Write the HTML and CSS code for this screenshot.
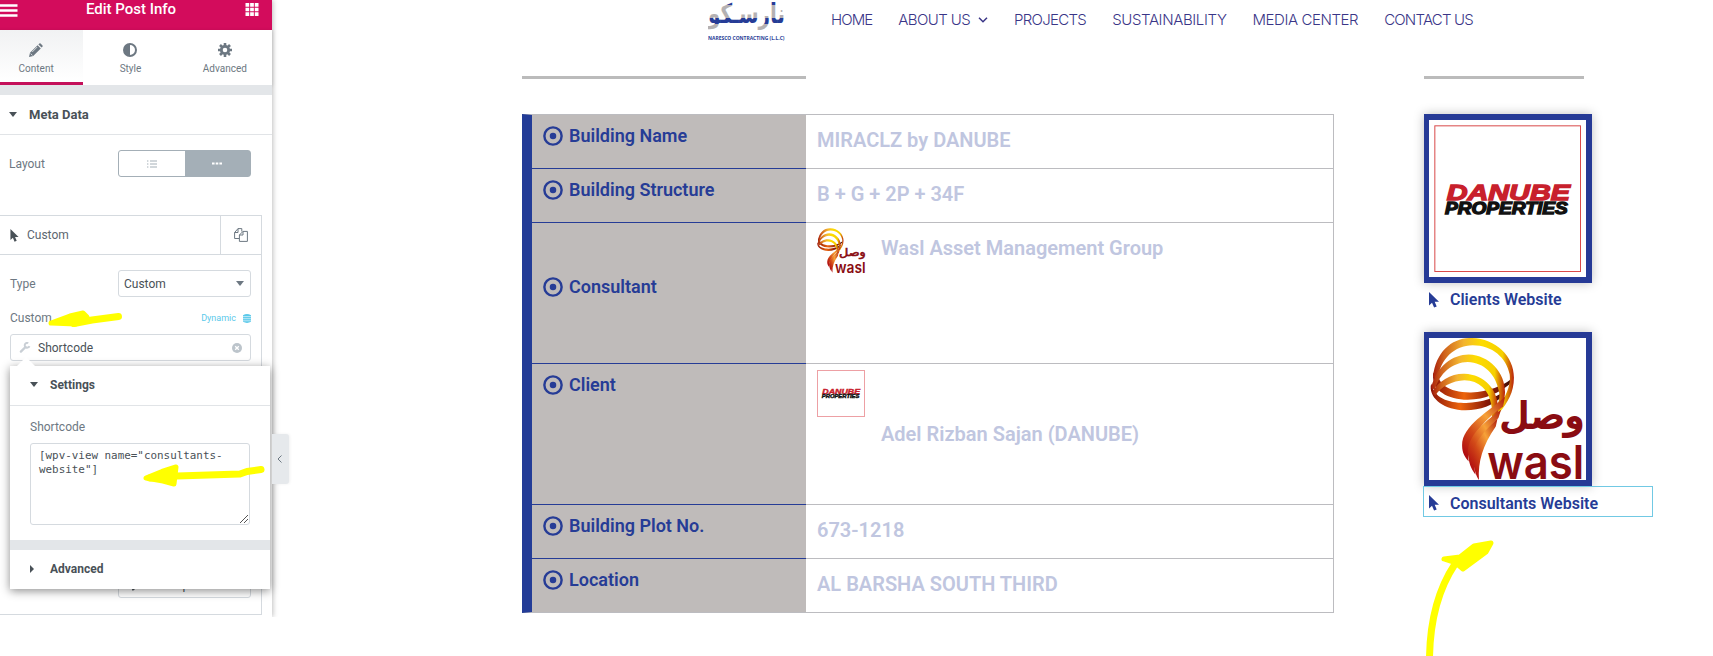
FILE: index.html
```html
<!DOCTYPE html>
<html lang="en">
  <head>
    <meta charset="UTF-8" />
    <meta name="viewport" content="width=device-width, initial-scale=1.0" />
    <title>Edit Post Info</title>
    <link rel="stylesheet" href="styles.css">
  </head>
  <body>
    <!-- shared logos and icons -->
    <svg class="defs" aria-hidden="true">
      <defs>
        <linearGradient id="gold" x1="0" y1="0" x2="1" y2="0">
          <stop offset="0" stop-color="#a8200c" />
          <stop offset="0.14" stop-color="#cf621c" />
          <stop offset="0.38" stop-color="#f3b430" />
          <stop offset="0.6" stop-color="#fddc00" />
          <stop offset="0.86" stop-color="#f6d000" />
          <stop offset="1" stop-color="#b8200c" />
        </linearGradient>
        <linearGradient id="ember" x1="0" y1="0" x2="1" y2="0">
          <stop offset="0" stop-color="#8a1208" />
          <stop offset="0.4" stop-color="#ec640c" />
          <stop offset="0.75" stop-color="#8a1a08" />
          <stop offset="1" stop-color="#3c0c06" />
        </linearGradient>
        <linearGradient id="stem" x1="1" y1="0" x2="0.2" y2="1">
          <stop offset="0" stop-color="#b01c0c" />
          <stop offset="0.4" stop-color="#f7a238" />
          <stop offset="0.7" stop-color="#d24a18" />
          <stop offset="1" stop-color="#b00c10" />
        </linearGradient>
        <linearGradient id="naresco" gradientUnits="userSpaceOnUse" x1="0" y1="0" x2="0" y2="42">
          <stop offset="0.13" stop-color="#263c96" />
          <stop offset="0.13" stop-color="#b5b1b2" />
          <stop offset="0.43" stop-color="#b5b1b2" />
          <stop offset="0.43" stop-color="#263c96" />
          <stop offset="0.57" stop-color="#263c96" />
          <stop offset="0.57" stop-color="#b5b1b2" />
        </linearGradient>
      </defs>
      <symbol id="wasl" viewBox="0 0 471 430">
        <path fill="url(#ember)" d="M24 88C16 140 60 166 125 165C180 162 220 145 246 125L242 140C210 166 170 186 115 187C55 186 6 160 10 108Z" />
        <path fill="url(#ember)" d="M5 138C15 190 70 197 110 197C160 196 200 180 228 160L222 176C190 205 155 219 108 219C45 217 0 185 3 145Z" />
        <path fill="url(#gold)" d="M10 118C18 40 70-2 128 0C200 2 255 55 255 120C255 165 235 195 212 225L207 212C235 170 246 140 242 110C232 60 190 22 130 22C75 23 32 62 24 125Z" />
        <path fill="url(#gold)" d="M5 150C20 85 70 50 118 50C180 52 229 105 228 165C227 195 210 222 198 240L193 225C211 195 214 180 209 160C200 112 165 74 115 73C70 74 28 107 16 158Z" />
        <path fill="url(#gold)" d="M8 165C25 130 65 107 105 108C165 110 207 155 207 215C206 230 204 240 200 250L184 255C190 235 191 225 186 200C178 157 150 129 105 128C70 129 32 147 16 176Z" />
        <path fill="url(#stem)" d="M228 178C180 222 98 265 98 325C98 350 108 362 118 374C106 320 160 248 222 208Z" />
        <path fill="url(#stem)" d="M216 217C160 258 110 300 116 355C120 388 130 402 139 414C124 345 160 290 208 242Z" />
        <path fill="url(#stem)" d="M205 245C155 290 124 330 131 372C135 400 141 420 149 430C146 375 160 325 200 268Z" />
        <text class="wasl-ar" x="212" y="272" textLength="256" lengthAdjust="spacingAndGlyphs" direction="ltr">وصل</text>
        <text class="wasl-en" x="174" y="427" textLength="294" lengthAdjust="spacingAndGlyphs">wasl</text>
      </symbol>
      <symbol id="danube" viewBox="0 0 471 471">
        <text class="danube-top" x="53" y="239" textLength="370" lengthAdjust="spacingAndGlyphs">DANUBE</text>
        <text class="danube-bottom" x="48" y="282" textLength="368" lengthAdjust="spacingAndGlyphs">PROPERTIES</text>
      </symbol>
      <symbol id="pointer" viewBox="0 0 10 16">
        <path d="M0 0V13.6L3 10.8L5.1 15.6L7.7 14.5L5.7 9.8H10Z" />
      </symbol>
      <symbol id="dot-circle" viewBox="0 0 19 19">
        <circle cx="9.5" cy="9.5" r="8.2" fill="none" stroke="currentColor" stroke-width="2.3" />
        <circle cx="9.5" cy="9.5" r="3.1" fill="currentColor" />
      </symbol>
    </svg>

    <aside class="panel">
      <header class="panel-header">
        <svg class="menu-icon" viewBox="0 0 18 13"><path d="M0 1.5H17.5M0 6.5H17.5M0 11.5H17.5" /></svg>
        <span class="panel-title">Edit Post Info</span>
        <svg class="apps-icon" viewBox="0 0 14 14"><path d="M0 0h4v4H0zM5 0h4v4H5zM10 0h4v4h-4zM0 5h4v4H0zM5 5h4v4H5zM10 5h4v4h-4zM0 10h4v4H0zM5 10h4v4H5zM10 10h4v4h-4z" /></svg>
      </header>

      <nav class="tabs">
        <a class="tab active">
          <svg viewBox="0 0 14 14"><path d="M0 14L1 9.8L8.6 2.2L11.8 5.4L4.2 13ZM9.4 1.4L10.4.4Q11 0 11.6.5L13.5 2.4Q14 3 13.6 3.6L12.6 4.6Z" /><path d="M1.6 10.6L3.5 12.4M3.2 9L8.2 4" stroke="#fff" stroke-width="0.7" /></svg>
          Content
        </a>
        <a class="tab">
          <svg viewBox="0 0 14 14"><circle cx="7" cy="7" r="6" fill="none" stroke="#6d7882" stroke-width="2" /><path d="M7 1A6 6 0 0 0 7 13Z" /></svg>
          Style
        </a>
        <a class="tab">
          <svg viewBox="0 0 14 14"><circle cx="7" cy="7" r="3.7" fill="none" stroke="#6d7882" stroke-width="2.8" /><path d="M7 0V3M7 11V14M0 7H3M11 7H14M2 2L4 4M10 10L12 12M12 2L10 4M4 10L2 12" stroke="#6d7882" stroke-width="2.6" /></svg>
          Advanced
        </a>
      </nav>

      <div class="section-title"><i class="caret-down"></i>Meta Data</div>

      <div class="control layout-control">
        <span>Layout</span>
        <div class="toggle">
          <span><svg viewBox="0 0 10 8"><path d="M0 1H1.4M0 4H1.4M0 7H1.4M3 1H10M3 4H10M3 7H10" stroke="#a4afb7" /></svg></span>
          <span class="on"><svg viewBox="0 0 10 8"><path d="M0 3.5H2.6M3.7 3.5H6.3M7.4 3.5H10" stroke="#fff" stroke-width="2.2" /></svg></span>
        </div>
      </div>

      <div class="repeater">
        <div class="repeater-head">
          <span class="repeater-name"><svg class="ptr"><use href="#pointer" /></svg>Custom</span>
          <span class="copy"><svg viewBox="0 0 14 14"><path d="M5 10.5H.6V4.5L4 .6H7.8V3.5M4 .6V4.5H.6M5.4 7L9 3.4H13.4V13.4H5.4ZM9 3.4V7H5.4" /></svg></span>
        </div>
        <div class="control type-control">
          <span>Type</span>
          <div class="select">Custom<i class="caret-down"></i></div>
        </div>
        <div class="control custom-control">
          <span>Custom</span>
          <span class="dynamic">Dynamic
            <svg viewBox="0 0 8 9"><path d="M0 1.2Q4-1 8 1.2V7.8Q4 10 0 7.8Z" /><path d="M0 2.6H8M0 4.7H8M0 6.8H8" stroke="#fff" stroke-width="0.6" /></svg>
          </span>
        </div>
        <div class="tag-input">
          <svg class="wrench" viewBox="0 0 11 11"><path d="M1.4 9.6L6 5" stroke-width="2.3" stroke-linecap="round" /><path d="M8.8 1.2A2.4 2.4 0 1 0 9.9 4.1" stroke-width="1.9" /></svg>
          Shortcode
          <svg class="clear" viewBox="0 0 10 10"><circle cx="5" cy="5" r="5" /><path d="M3.2 3.2L6.8 6.8M6.8 3.2L3.2 6.8" stroke="#fff" stroke-width="1.3" /></svg>
        </div>
        <div class="select icon-select"><svg class="ptr"><use href="#pointer" /></svg>mouse point...</div>
      </div>

      <div class="popover">
        <div class="popover-title"><i class="caret-down"></i>Settings</div>
        <div class="popover-body">
          <label>Shortcode</label>
          <div class="code">[wpv-view name="consultants-<br>website"]
            <svg viewBox="0 0 8 8"><path d="M0 8L8 0M4 8L8 4" /></svg>
          </div>
        </div>
        <div class="popover-title last"><i class="caret-right"></i>Advanced</div>
      </div>

      <div class="collapse"><svg viewBox="0 0 5 8"><path d="M4.5.5L1 4L4.5 7.5" /></svg></div>
    </aside>

    <main>
      <header class="site-header">
        <svg class="logo" viewBox="0 0 78 42">
          <text class="logo-ar" x="0" y="23" textLength="77" lengthAdjust="spacingAndGlyphs" direction="ltr" fill="url(#naresco)">نارسـكو</text>
          <text class="logo-en" x="0" y="40.3" textLength="76.5" lengthAdjust="spacingAndGlyphs">NARESCO CONTRACTING (L.L.C)</text>
        </svg>
        <nav class="site-nav">
          <a class="home">HOME</a>
          <a class="about">ABOUT US <svg viewBox="0 0 10 6"><path d="M1 .8L5 4.8L9 .8" /></svg></a>
          <a class="projects">PROJECTS</a>
          <a class="sustain">SUSTAINABILITY</a>
          <a class="media">MEDIA CENTER</a>
          <a class="contact">CONTACT US</a>
        </nav>
      </header>

      <div class="columns">
        <section>
          <hr class="rule wide" />
          <div class="info">
            <div class="row">
              <div class="label"><svg><use href="#dot-circle" /></svg>Building Name</div>
              <div class="value">MIRACLZ by DANUBE</div>
            </div>
            <div class="row">
              <div class="label"><svg><use href="#dot-circle" /></svg>Building Structure</div>
              <div class="value">B + G + 2P + 34F</div>
            </div>
            <div class="row tall">
              <div class="label middle"><svg><use href="#dot-circle" /></svg>Consultant</div>
              <div class="value with-logo">
                <svg class="wasl-small"><use href="#wasl" /></svg>
                <span>Wasl Asset Management Group</span>
              </div>
            </div>
            <div class="row tall client">
              <div class="label"><svg><use href="#dot-circle" /></svg>Client</div>
              <div class="value with-logo">
                <svg class="danube-small" viewBox="16 16 440 440"><use href="#danube" width="471" height="471" /></svg>
                <span>Adel Rizban Sajan (DANUBE)</span>
              </div>
            </div>
            <div class="row">
              <div class="label"><svg><use href="#dot-circle" /></svg>Building Plot No.</div>
              <div class="value">673-1218</div>
            </div>
            <div class="row">
              <div class="label"><svg><use href="#dot-circle" /></svg>Location</div>
              <div class="value">AL BARSHA SOUTH THIRD</div>
            </div>
          </div>
        </section>

        <section>
          <hr class="rule narrow" />
          <div class="card danube-card">
            <svg viewBox="0 0 471 471">
              <rect x="17.5" y="17.5" width="437" height="437" fill="none" stroke="#d94a4a" stroke-width="3" />
              <use href="#danube" width="471" height="471" />
            </svg>
          </div>
          <a class="link"><svg class="ptr"><use href="#pointer" /></svg>Clients Website</a>
          <div class="card wasl-card"><svg><use href="#wasl" /></svg></div>
          <a class="link selected"><svg class="ptr"><use href="#pointer" /></svg>Consultants Website</a>
        </section>
      </div>
    </main>

    <!-- marker arrows -->
    <svg class="marks" viewBox="0 0 1713 656">
      <path class="fill" d="M51 323L70 316L83 313L87 317L76 324Z" />
      <path d="M74 323.5L92 320L118.500 316.500" />
      <path class="fill" d="M146 478L162 471.500L176 467L174 484L163 481Z" />
      <path d="M150 478L177 476L240 474L247 471.500L261 469.500" />
      <path class="fill" d="M1444 559L1460 557L1474 546L1491 543L1486 552L1463 569L1456 563Z" />
      <path d="M1429.500 658C1430 620 1439 588 1455 564" />
    </svg>
  </body>
</html>
```

FILE: styles.css
```css
* {
  box-sizing: border-box;
}

body {
  margin: 0;
  width: 1713px;
  height: 656px;
  overflow: hidden;
  display: flex;
  align-items: flex-start;
  position: relative;
  background: #fff;
  font-family: Roboto, "Liberation Sans", sans-serif;
}

svg {
  display: block;
  flex: none;
}

.defs {
  position: absolute;
  width: 0;
  height: 0;
}

/* editor panel */
.panel {
  position: relative;
  flex: none;
  width: 272px;
  height: 617px;
  background: #fff;
  box-shadow: 1px 0 5px rgba(0, 0, 0, 0.25);
  clip-path: inset(0 -30px 0 0);
  font-size: 12px;
  color: #6d7882;
}

.panel-header {
  display: flex;
  align-items: flex-start;
  justify-content: space-between;
  height: 30px;
  padding: 3px 13px 0 0;
  background: #d30c5c;
  color: #fff;
}

.panel-title {
  margin: -3px 0 0 -1px;
  font-size: 15px;
  font-weight: 500;
  line-height: 19px;
}

.menu-icon {
  width: 18px;
  height: 13px;
  margin-top: 1px;
  stroke: #fff;
  stroke-width: 2.4;
}

.apps-icon {
  width: 14px;
  height: 13px;
  fill: #fff;
}

.tabs {
  display: flex;
  height: 55px;
  margin-left: -11px;
  box-shadow: 0 1px 4px rgba(0, 0, 0, 0.15);
}

.tab {
  flex: 1;
  display: flex;
  flex-direction: column;
  align-items: center;
  gap: 5px;
  padding-top: 13px;
  font-size: 10px;
  line-height: 13px;
}

.tab.active {
  background: linear-gradient(#f1f2f3, #fff);
  border-bottom: 3px solid #c4105a;
}

.tab svg {
  width: 14px;
  height: 14px;
  fill: #6d7882;
}

.section-title {
  display: flex;
  align-items: center;
  gap: 12px;
  height: 50px;
  padding-left: 9px;
  border-top: 10px solid #e3e6e9;
  border-bottom: 1px solid #e1e4e7;
  font-size: 13px;
  font-weight: 700;
  color: #495157;
}

.caret-down {
  border: 4px solid transparent;
  border-top: 5px solid currentColor;
  border-bottom: 0;
}

.caret-right {
  border: 4px solid transparent;
  border-left: 4px solid currentColor;
  border-right: 0;
}

.control {
  display: flex;
  align-items: center;
  justify-content: space-between;
}

.layout-control {
  height: 27px;
  margin: 15px 21px 0 9px;
}

.toggle {
  display: flex;
  width: 133px;
  height: 27px;
  border: 1px solid #a4afb7;
  border-radius: 3px;
}

.toggle span {
  flex: 1;
  display: flex;
  align-items: center;
  justify-content: center;
}

.toggle .on {
  background: #a4afb7;
}

.toggle svg {
  width: 10px;
  height: 8px;
}

.repeater {
  width: 262px;
  height: 400px;
  margin-top: 38px;
  border: 1px solid #d5dadf;
  border-left: 0;
}

.repeater-head {
  display: flex;
  height: 39px;
  border-bottom: 1px solid #d5dadf;
  color: #5c666f;
}

.repeater-name {
  display: flex;
  align-items: center;
  gap: 8px;
  width: 221px;
  padding-left: 10px;
  border-right: 1px solid #d5dadf;
}

.ptr {
  width: 9px;
  height: 13px;
  fill: #495157;
}

.copy {
  padding: 12px 0 0 13px;
}

.copy svg {
  width: 14px;
  height: 14px;
  fill: none;
  stroke: #6d7882;
}

.type-control {
  height: 27px;
  margin: 15px 10px 0;
}

.select {
  display: flex;
  align-items: center;
  justify-content: space-between;
  width: 133px;
  height: 27px;
  padding: 0 6px 0 5px;
  border: 1px solid #d5dadf;
  border-radius: 3px;
  color: #495157;
}

.select .caret-down {
  color: #6d7882;
}

.custom-control {
  height: 14px;
  margin: 14px 10px 0;
}

.dynamic {
  display: flex;
  align-items: center;
  gap: 7px;
  font-size: 9px;
  color: #5bc9ea;
}

.dynamic svg {
  width: 8px;
  height: 9px;
  fill: #5bc9ea;
}

.tag-input {
  display: flex;
  align-items: center;
  width: 241px;
  height: 27px;
  margin: 9px 0 0 10px;
  padding: 0 8px;
  border: 1px solid #d5dadf;
  border-radius: 3px;
  color: #495157;
}

.wrench {
  width: 12px;
  height: 11px;
  margin-right: 7px;
  fill: none;
  stroke: #c9cfd5;
}

.clear {
  width: 10px;
  height: 10px;
  margin-left: auto;
  fill: #bcc4cb;
}

.icon-select {
  justify-content: flex-start;
  gap: 6px;
  margin: 210px 0 0 118px;
  padding-left: 9px;
}

.popover {
  position: absolute;
  left: 10px;
  top: 366px;
  width: 260px;
  height: 223px;
  background: #fff;
  box-shadow: 0 2px 9px rgba(0, 0, 0, 0.45);
}

.popover::before {
  content: "";
  position: absolute;
  left: 6px;
  top: -9px;
  border: 10px solid transparent;
  border-top: 0;
  border-bottom-color: #fff;
}

.popover-title {
  display: flex;
  align-items: center;
  gap: 12px;
  height: 40px;
  padding: 0 0 2px 20px;
  border-bottom: 1px solid #e1e4e7;
  font-weight: 700;
  color: #495157;
}

.popover-title.last {
  height: 49px;
  border-top: 10px solid #e3e6e9;
  border-bottom: 0;
  gap: 16px;
}

.popover-body {
  height: 134px;
  padding: 14px 20px 0;
}

.popover-body label {
  display: block;
  line-height: 15px;
}

.code {
  position: relative;
  width: 220px;
  height: 82px;
  margin-top: 8px;
  padding: 5px 8px;
  border: 1px solid #d5dadf;
  border-radius: 3px;
  font-family: "DejaVu Sans Mono", monospace;
  font-size: 10.9px;
  line-height: 14px;
  white-space: nowrap;
  color: #495157;
}

.code svg {
  position: absolute;
  right: 1px;
  bottom: 1px;
  width: 8px;
  height: 8px;
  stroke: #555;
}

.collapse {
  position: absolute;
  left: 272px;
  top: 434px;
  display: flex;
  align-items: center;
  width: 17px;
  height: 50px;
  padding-left: 5px;
  border-radius: 0 3px 3px 0;
  background: #e6e9ec;
  box-shadow: 1px 0 3px rgba(0, 0, 0, 0.06);
}

.collapse svg {
  width: 5px;
  height: 8px;
  fill: none;
  stroke: #6d7882;
}

/* site */
main {
  flex: none;
  width: 1441px;
  padding-left: 250px;
  color: #263c96;
}

.site-header {
  display: flex;
  height: 76px;
  padding-left: 186px;
}

.logo {
  width: 78px;
  height: 42px;
}

.logo-ar {
  font: 700 27px "DejaVu Sans", sans-serif;
}

.logo-en {
  font: 700 5.4px "Open Sans", sans-serif;
  fill: #263c96;
}

.site-nav {
  display: flex;
  align-items: flex-start;
  gap: 26px;
  margin: 10px 0 0 45px;
  font-family: Inter, "Liberation Sans", sans-serif;
  font-size: 15px;
  font-weight: 300;
  line-height: 20px;
  letter-spacing: -0.6px;
  white-space: nowrap;
  color: #3a3587;
}

.home {
  letter-spacing: -0.9px;
}

.about {
  display: flex;
  align-items: center;
  gap: 8px;
}

.about svg {
  width: 10px;
  height: 6px;
  fill: none;
  stroke: #3a3587;
  stroke-width: 1.5;
}

.projects {
  letter-spacing: -0.7px;
}

.sustain {
  letter-spacing: -0.38px;
}

.media {
  letter-spacing: -0.42px;
}

.contact {
  letter-spacing: -0.8px;
}

.columns {
  display: grid;
  grid-template-columns: 812px 230px;
  gap: 90px;
}

.rule {
  height: 3px;
  margin: 0 0 35px;
  border: 0;
  background: #bbb;
}

.rule.wide {
  width: 284px;
}

.rule.narrow {
  width: 160px;
}

.info {
  border: 1px solid #bcbcc0;
  border-left: 10px solid #233c97;
}

.row {
  display: flex;
  height: 54px;
}

.row.tall {
  height: 141px;
}

.row:last-child {
  height: 53px;
}

.label {
  display: flex;
  gap: 6px;
  width: 274px;
  padding: 9px 0 0 11px;
  border-bottom: 1px solid #263c96;
  background: #bfbbba;
  font-size: 18px;
  font-weight: 600;
  line-height: 24px;
}

.label svg {
  width: 20px;
  height: 20px;
  margin-top: 2px;
}

.label.middle {
  padding-top: 52px;
}

.value {
  flex: 1;
  padding: 13px 0 0 11px;
  border-bottom: 1px solid #bcbcc0;
  font-size: 20px;
  font-weight: 600;
  line-height: 24px;
  color: #c0c6e0;
}

.row:last-child .label,
.row:last-child .value {
  border-bottom: 0;
}

.with-logo {
  display: flex;
  gap: 15px;
  padding-top: 5px;
}

.with-logo span {
  padding-top: 8px;
}

.wasl-small {
  width: 49px;
  height: 45px;
}

.danube-small {
  width: 48px;
  height: 47px;
  margin: 1px 1px 0 0;
  border: 1px solid #eda0a4;
}

.client .with-logo span {
  padding-top: 53px;
}

.wasl-ar {
  font: 400 106px "DejaVu Sans", sans-serif;
  fill: #8a0c12;
  stroke: #8a0c12;
  stroke-width: 6;
}

.wasl-en {
  font: 600 142px Inter, sans-serif;
  fill: #8a0c12;
}

.danube-top {
  font: italic 700 67px "Liberation Sans", sans-serif;
  fill: #c8202c;
  stroke: #c8202c;
  stroke-width: 4;
}

.danube-bottom {
  font: italic 700 49px "Liberation Sans", sans-serif;
  fill: #111;
  stroke: #111;
  stroke-width: 4;
}

.card {
  width: 168px;
  border: 6px solid #263a96;
  border-left-width: 5px;
  background: #fff;
  box-shadow: 0 0 10px rgba(0, 0, 0, 0.25);
}

.card svg {
  width: 157px;
  height: 100%;
}

.danube-card {
  height: 169px;
}

.wasl-card {
  height: 154px;
  margin-top: 18px;
}

.link {
  display: flex;
  align-items: center;
  gap: 11px;
  height: 31px;
  padding: 2px 0 0 5px;
  font-size: 16px;
  font-weight: 600;
}

.link .ptr {
  width: 10px;
  height: 16px;
  fill: #263c96;
}

.link.selected {
  position: relative;
  width: 230px;
  margin-left: -1px;
  padding-top: 3px;
  border: 1px solid #71c9e4;
}

.marks {
  position: absolute;
  inset: 0;
  width: 1713px;
  height: 656px;
  pointer-events: none;
  fill: none;
  stroke: #ff0;
  stroke-width: 7;
  stroke-linecap: round;
  stroke-linejoin: round;
}

.marks .fill {
  fill: #ff0;
  stroke-width: 5;
}
```
